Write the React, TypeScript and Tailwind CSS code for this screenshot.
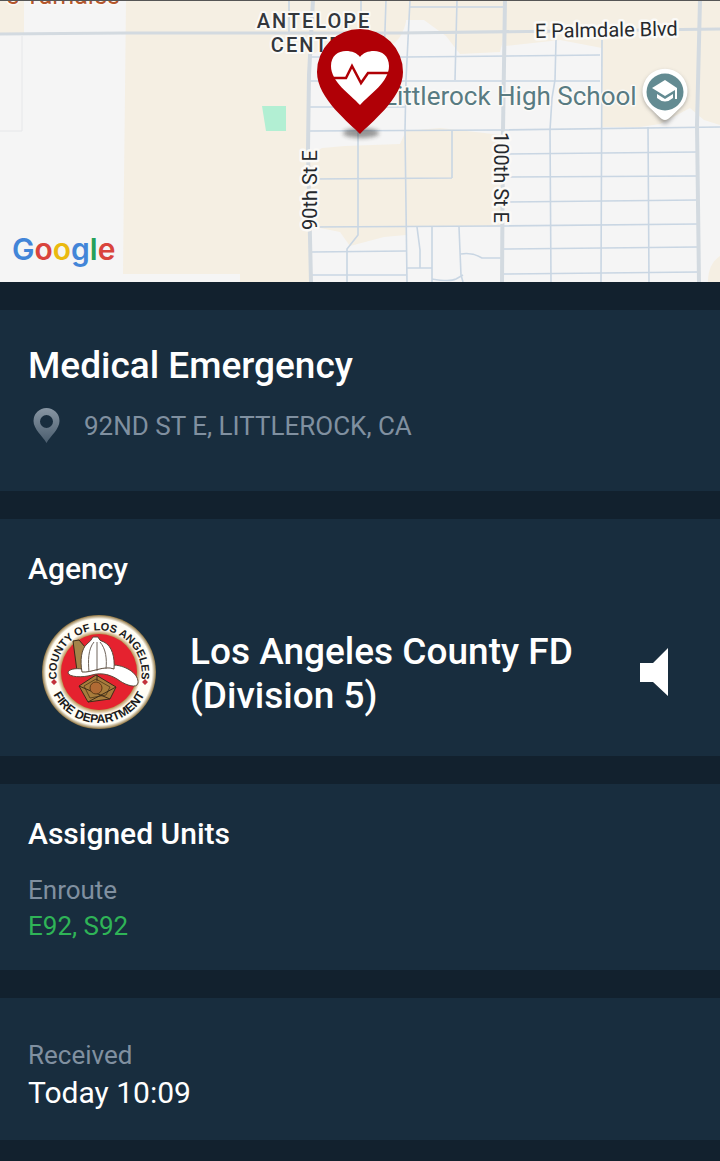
import React from 'react';

interface Incident {
    type: string;
    address: string;
    agency: string;
    status: string;
    units: string[];
    received: string;
}

const incident: Incident = {
    type: 'Medical Emergency',
    address: '92ND ST E, LITTLEROCK, CA',
    agency: 'Los Angeles County FD (Division 5)',
    status: 'Enroute',
    units: ['E92', 'S92'],
    received: 'Today 10:09',
};

const IncidentMap: React.FC = () => (
    <svg
        className="block w-full h-[282px] bg-[#f5f5f5]"
        viewBox="0 0 720 282"
        preserveAspectRatio="xMidYMid slice"
        role="img"
        aria-label="Incident map"
    >
        <defs>
            <filter id="soft" x="-50%" y="-100%" width="200%" height="300%">
                <feGaussianBlur stdDeviation="2" />
            </filter>
        </defs>

        {/* land */}
        <rect width="720" height="282" fill="#f5f5f5" />
        <g fill="#f5efe3">
            <path d="M0 0H24V33H0Z" />
            <path d="M126 0H313L309 75V282H240V274H123Z" />
            <path d="M313 0H406V22Q400 48 376 50L330 44L310 56Z" />
            <path d="M406 0H505V33L500 52L460 54L446 36L424 20H406Z" />
            <path d="M505 0H720V125L704 120L690 108L660 124L640 127H602V48L560 40L505 46Z" />
            <path d="M322 148L345 146L400 144L406 131L440 128L502 135V226H406V235L384 237L350 246L340 232L310 226V156Z" />
            <path d="M720 256Q708 264 708 282H720Z" />
        </g>
        <path d="M262 106H286V131H266Z" fill="#b2efd3" />

        {/* roads */}
        <g fill="none" stroke="#c9d6e3" strokeWidth="1.6">
            <path d="M289 0V32M361 0V40M386 0L384 60M410 0L406 80L405 130L407 282M457 0L455 80" />
            <path d="M410 7H505M310 57L406 57L600 55M310 81H600M310 107H406M310 131L500 130L720 127" />
            <path d="M358 132V235L347 249V282M313 179L452 178M452 130V178" />
            <path d="M310 227L500 226L698 224M312 252L406 251M312 275H406" />
            <path d="M556 40L555 80L552 98L550 130L551 282M602 40L601 282M648 127L649 282" />
            <path d="M503 154L698 152M503 177L698 176M503 202L698 200M503 249L698 247M503 274L698 272" />
            <path d="M417 227L420 250V268M432 227V282M407 268H432M459 227L461 275L463 282M461 254Q472 252 482 258H502M432 279Q450 282 456 279L463 275" />
        </g>
        <path d="M22 36V131H0" fill="none" stroke="#e6e7e9" strokeWidth="1" />
        <g fill="none" stroke="#d3dae0">
            <path d="M0 34L126 33H400L720 29" strokeWidth="3" />
            <path d="M313 0L309 75L308 150L311 282M505 0L503 130L502 282M700 0L697 125L699 282" strokeWidth="4" />
        </g>

        {/* labels */}
        <g className="font-[Roboto,sans-serif] [paint-order:stroke]" stroke="#fbfaf7" strokeLinejoin="round">
            <text x="120" y="4" textAnchor="end" fontSize="25" strokeWidth="3" fill="#b4562c">s Tamales</text>
            <g fontSize="20" fontWeight="500" strokeWidth="4" fill="#33373c" className="tracking-widest" textAnchor="middle">
                <text x="314" y="28">ANTELOPE</text>
                <text x="314" y="52">CENTER</text>
            </g>
            <g fontSize="20" strokeWidth="5" fill="#26292d">
                <text x="535" y="38" transform="rotate(-1 535 38)">E Palmdale Blvd</text>
                <text transform="translate(317 230) rotate(-90)">90th St E</text>
                <text transform="translate(494 132) rotate(90)">100th St E</text>
            </g>
            <text x="383" y="105" fontSize="26" strokeWidth="3" fill="#587b82">Littlerock High School</text>
        </g>

        {/* school marker */}
        <path d="M665 124C661 124 657 115 650 109A22 22 0 1 1 680 109C673 115 669 124 665 124Z" fill="#555" opacity="0.5" filter="url(#soft)" />
        <path d="M665 120C661 120 657 114 650 108A22.500 22.500 0 1 1 680 108C673 114 669 120 665 120Z" fill="#fff" />
        <circle cx="665" cy="92" r="18.500" fill="#638b92" />
        <path d="M665 80L652 88L665 96L675 90V99H677V88Z" fill="#fff" />
        <path d="M657 94V98Q665 105 673 98V94L665 99Z" fill="#fff" />

        {/* incident marker */}
        <ellipse cx="361" cy="133" rx="18" ry="5" fill="#222" opacity="0.45" filter="url(#soft)" />
        <path d="M360 134C351 124 317 99 317 72A43 43 0 0 1 403 72C403 99 369 124 360 134Z" fill="#b00006" />
        <path d="M360 105C350 94 331 82 331 66C331 56 338 51 346 51C352 51 357 53 360 57C363 53 368 51 374 51C382 51 389 56 389 66C389 82 370 94 360 105Z" fill="#fff" />
        <path d="M332 78H346L352 66L361 83L368 73H390" fill="none" stroke="#b00006" strokeWidth="2.500" />

        <text x="12" y="260" fontSize="30" className="font-[Inter,sans-serif] font-semibold">
            <tspan fill="#4285d8">G</tspan>
            <tspan fill="#d9443c">o</tspan>
            <tspan fill="#eab90f">o</tspan>
            <tspan fill="#4285d8">g</tspan>
            <tspan fill="#26a05a">l</tspan>
            <tspan fill="#d9443c">e</tspan>
        </text>
        <rect width="720" height="1" fill="#555" />
    </svg>
);

const AgencySeal: React.FC = () => (
    <svg className="size-[114px] shrink-0" viewBox="0 0 114 114" role="img" aria-label="County of Los Angeles Fire Department">
        <defs>
            <path id="seal-top" d="M16 69A42.500 42.500 0 1 1 98 69" />
            <path id="seal-bottom" d="M6 57A51 51 0 0 0 108 57" />
            <radialGradient id="seal-rim">
                <stop offset="0.660" stopColor="#b78b4a" />
                <stop offset="0.740" stopColor="#fffdf5" />
                <stop offset="0.930" stopColor="#fffdf5" />
                <stop offset="1" stopColor="#8f7440" />
            </radialGradient>
        </defs>
        <circle cx="57" cy="57" r="57" fill="url(#seal-rim)" />
        <circle cx="57" cy="57" r="38" fill="#e5222f" />

        <g className="font-['Liberation_Sans',sans-serif] font-bold" fontSize="12" fill="#1b1b1b" textAnchor="middle">
            <text fontSize="11">
                <textPath href="#seal-top" startOffset="50%">COUNTY OF LOS ANGELES</textPath>
            </text>
            <text>
                <textPath href="#seal-bottom" startOffset="50%">FIRE DEPARTMENT</textPath>
            </text>
        </g>
        <path d="M12 64L15 67L12 70L9 67ZM103 64L106 67L103 70L100 67Z" fill="#c2323c" />

        {/* helmet */}
        <path d="M31 26L37 25L43 32L41 58L35 56Z" fill="#a58349" stroke="#3c2b18" strokeWidth="1" />
        <path d="M26 58C26 54 34 53 40 54L72 50C86 51 97 60 96 68C95 74 84 70 78 66C70 60 60 57 50 60C40 63 27 62 26 58Z" fill="#fff" stroke="#5b4a3a" strokeWidth="1" />
        <path d="M40 57C38 46 39 34 45 29Q49 26 51 22H56Q57 26 62 27C70 31 73 42 72 54C62 50 50 58 40 57Z" fill="#fff" stroke="#5b4a3a" strokeWidth="1" />
        <path d="M52 27C46 34 46 46 47 57M55 27V56M58 27C64 34 65 44 64 54" fill="none" stroke="#6f655c" strokeWidth="1" />

        {/* front shield */}
        <path d="M37 71L54 60L74 72L68 84L46 87Z" fill="#a87c3c" stroke="#3c2b18" strokeWidth="1" />
        <path d="M42 71L54 64L68 72L64 80L48 83Z" fill="none" stroke="#5c431f" strokeWidth="1" />
        <path d="M37 71L68 84M74 72L46 87M55 60V66" stroke="#3c2b18" strokeWidth="1" />
        <circle cx="54" cy="73" r="6" fill="#b06a34" stroke="#5c3a18" strokeWidth="1" />
    </svg>
);

const LocationIcon: React.FC = () => (
    <svg className="w-9 h-9 shrink-0" viewBox="0 0 36 36" aria-hidden="true">
        <defs>
            <linearGradient id="pin-fill" x1="0" y1="0" x2="0" y2="1">
                <stop offset="0" stopColor="#8896a3" />
                <stop offset="1" stopColor="#4a5d6e" />
            </linearGradient>
        </defs>
        <path
            d="M18.500 35C14.500 28 5.500 21 5.500 13A13 13 0 0 1 31.500 13C31.500 21 22.500 28 18.500 35ZM18.500 7A6.500 6.500 0 1 0 18.500 20A6.500 6.500 0 1 0 18.500 7Z"
            fill="url(#pin-fill)"
            fillRule="evenodd"
        />
    </svg>
);

const App: React.FC = () => {
    return (
        <main className="min-h-screen bg-[#12212e] font-[Roboto,sans-serif] text-white">
            <IncidentMap />

            <div className="flex flex-col gap-7 pt-7">
                <section className="bg-[#182d3e] px-7 pt-8 pb-[45px]">
                    <h1 className="text-[37px] leading-12 font-medium">{incident.type}</h1>
                    <div className="mt-4 flex items-center gap-5">
                        <LocationIcon />
                        <p className="text-[26px] leading-10 text-[#8090a0]">{incident.address}</p>
                    </div>
                </section>

                <section className="bg-[#182d3e] px-7 pt-8 pb-[27px]">
                    <h2 className="text-[30px] leading-9 font-medium">Agency</h2>
                    <div className="mt-7 flex items-center gap-[34px] px-3.5">
                        <AgencySeal />
                        <p className="min-w-0 max-w-[400px] pt-1 text-[37px] leading-11 font-medium">{incident.agency}</p>
                        <button type="button" aria-label="Play audio" className="ml-auto mr-2.5 cursor-pointer">
                            <svg className="block w-7 h-12" viewBox="0 0 28 48" fill="#fff" aria-hidden="true">
                                <path d="M0 15H13L28 0V48L13 34H0Z" />
                            </svg>
                        </button>
                    </div>
                </section>

                <section className="bg-[#182d3e] px-7 pt-8 pb-[26px]">
                    <h2 className="text-[30px] leading-9 font-medium">Assigned Units</h2>
                    <p className="mt-5 text-[26px] leading-9 text-[#8090a0]">{incident.status}</p>
                    <p className="text-[26px] leading-9 text-[#2fb457]">{incident.units.join(', ')}</p>
                </section>

                <section className="bg-[#182d3e] px-7 pt-[39px] pb-[27px]">
                    <p className="text-[26px] leading-9 text-[#8090a0]">Received</p>
                    <p className="text-[30px] leading-10">{incident.received}</p>
                </section>
            </div>
        </main>
    );
};

export default App;
